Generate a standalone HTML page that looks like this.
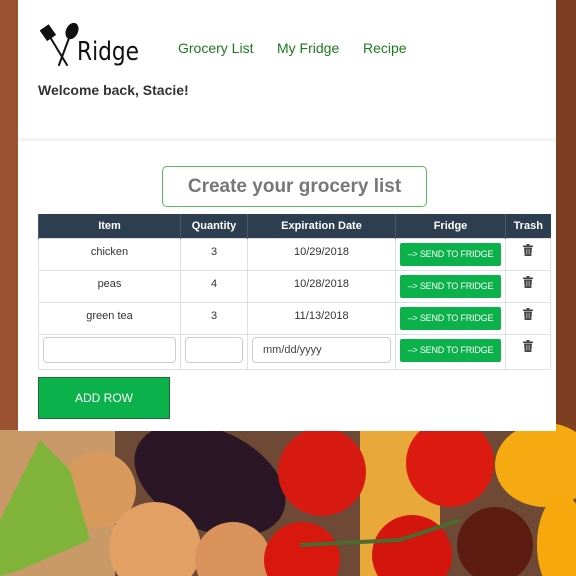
<!DOCTYPE html>
<html><head><style>
*{margin:0;padding:0;box-sizing:border-box}
body{width:576px;height:576px;overflow:hidden;position:relative;font-family:"Liberation Sans",Arial,sans-serif;background:#8a4a2a}
#bg{position:absolute;left:0;top:0}
.hdr{position:absolute;left:18px;top:0;width:538px;height:140px;background:#fff}
.band{position:absolute;left:18px;top:136px;width:538px;height:6px;background:linear-gradient(#fff,#ececec)}
.main{position:absolute;left:18px;top:141px;width:538px;height:290px;background:#fff}
.nav{position:absolute;top:40px;font-size:14px;color:#1e7a1e}
.welcome{position:absolute;left:38px;top:82px;font-size:14px;font-weight:bold;color:#333}
.title{position:absolute;left:162px;top:166px;width:265px;height:41px;border:1.5px solid #5cb85c;border-radius:5px;text-align:center;font-size:19px;font-weight:bold;color:#777;line-height:40px}
table{position:absolute;left:38px;top:214px;width:513px;border-collapse:collapse;font-size:11px;color:#333}
th{background:#2c3e50;color:#fff;height:24px;font-size:11px;border-left:1px solid #4a5a6a}
td{border:1px solid #e0e0e0;text-align:center;vertical-align:top;padding-top:7px;height:32px}
.btn{display:inline-block;background:#0bb14a;color:#fff;font-size:9px;width:101px;height:23px;line-height:23px;border-radius:2px;margin-top:-3px;letter-spacing:-0.2px}
.inp{border:1px solid #ccc;border-radius:4px;height:26px;background:#fff;text-align:left;font-size:11px;line-height:24px;padding-left:10px;color:#444;margin-top:-3px}
.add{position:absolute;left:38px;top:377px;width:132px;height:42px;background:#0bb14a;border:1px solid #1d6b2e;color:#fff;font-size:12px;text-align:center;line-height:40px}
.tr{display:inline-block;width:10px;height:12px;margin-top:-2px}
</style></head><body>
<svg id="bg" width="576" height="576">
<rect width="576" height="576" fill="#8a4a2c"/>
<rect x="0" y="0" width="20" height="430" fill="#9a5230"/>
<rect x="556" y="0" width="20" height="430" fill="#7c3f22"/>
<rect x="0" y="430" width="576" height="146" fill="#6e4a36"/>
<rect x="0" y="430" width="115" height="146" fill="#c99a68"/>
<rect x="360" y="430" width="80" height="146" fill="#e9a93a"/>
<ellipse cx="210" cy="480" rx="80" ry="50" transform="rotate(25 210 480)" fill="#2a1624"/>
<circle cx="98" cy="490" r="38" fill="#d89a5a"/>
<circle cx="155" cy="548" r="46" fill="#e2a064"/>
<circle cx="233" cy="560" r="38" fill="#d8925a"/>
<polygon points="0,520 40,440 70,470 90,540 20,570 0,576" fill="#7fb33a"/>
<circle cx="322" cy="472" r="44" fill="#d61a12"/>
<circle cx="450" cy="463" r="44" fill="#dc1a10"/>
<circle cx="302" cy="560" r="38" fill="#d8170f"/>
<circle cx="412" cy="555" r="40" fill="#d4150e"/>
<circle cx="495" cy="545" r="38" fill="#5c1c12"/>
<ellipse cx="545" cy="465" rx="50" ry="42" fill="#f4aa10"/>
<ellipse cx="562" cy="545" rx="25" ry="50" fill="#f6a80c"/>
<path d="M300 545 L400 540 L460 520" stroke="#4a6a30" stroke-width="4" fill="none"/>
</svg>
<div class="hdr"></div><div class="band"></div><div class="main"></div>
<svg style="position:absolute;left:40px;top:22px" width="110" height="50">
<g stroke="#111" stroke-width="2" fill="#111" stroke-linecap="round">
<rect x="3" y="5" width="9" height="11" transform="rotate(-35 8 10)"/>
<line x1="10" y1="15" x2="27" y2="43"/>
<ellipse cx="32" cy="9" rx="5" ry="7.5" transform="rotate(25 32 9)"/>
<line x1="29" y1="16" x2="19" y2="43"/>
</g>
<text x="37" y="38" font-family="'DejaVu Sans',sans-serif" font-size="26" fill="#111" textLength="62" lengthAdjust="spacingAndGlyphs">Ridge</text>
</svg>
<div class="nav" style="left:178px">Grocery List</div>
<div class="nav" style="left:277px">My Fridge</div>
<div class="nav" style="left:363px">Recipe</div>
<div class="welcome">Welcome back, Stacie!</div>
<div class="title">Create your grocery list</div>
<table>
<tr><th style="width:142px">Item</th><th style="width:67px">Quantity</th><th style="width:148px">Expiration Date</th><th style="width:110px">Fridge</th><th>Trash</th></tr>
<tr><td>chicken</td><td>3</td><td>10/29/2018</td><td><span class="btn">–&gt; SEND TO FRIDGE</span></td><td><svg class="tr" viewBox="0 0 10 12"><rect x="0" y="1.5" width="10" height="1.5" fill="#444"/><rect x="3.5" y="0" width="3" height="2" fill="#444"/><path d="M1 3.5h8l-.7 8.5H1.7z" fill="#444"/><path d="M3.5 5v5.5M5 5v5.5M6.5 5v5.5" stroke="#bbb" stroke-width=".6"/></svg></td></tr>
<tr><td>peas</td><td>4</td><td>10/28/2018</td><td><span class="btn">–&gt; SEND TO FRIDGE</span></td><td><svg class="tr" viewBox="0 0 10 12"><rect x="0" y="1.5" width="10" height="1.5" fill="#444"/><rect x="3.5" y="0" width="3" height="2" fill="#444"/><path d="M1 3.5h8l-.7 8.5H1.7z" fill="#444"/><path d="M3.5 5v5.5M5 5v5.5M6.5 5v5.5" stroke="#bbb" stroke-width=".6"/></svg></td></tr>
<tr><td>green tea</td><td>3</td><td>11/13/2018</td><td><span class="btn">–&gt; SEND TO FRIDGE</span></td><td><svg class="tr" viewBox="0 0 10 12"><rect x="0" y="1.5" width="10" height="1.5" fill="#444"/><rect x="3.5" y="0" width="3" height="2" fill="#444"/><path d="M1 3.5h8l-.7 8.5H1.7z" fill="#444"/><path d="M3.5 5v5.5M5 5v5.5M6.5 5v5.5" stroke="#bbb" stroke-width=".6"/></svg></td></tr>
<tr><td style="height:35px;padding:5px 4px 0"><div class="inp"></div></td><td style="padding:5px 4px 0"><div class="inp"></div></td><td style="padding:5px 4px 0"><div class="inp">mm/dd/yyyy</div></td><td><span class="btn">–&gt; SEND TO FRIDGE</span></td><td><svg class="tr" viewBox="0 0 10 12"><rect x="0" y="1.5" width="10" height="1.5" fill="#444"/><rect x="3.5" y="0" width="3" height="2" fill="#444"/><path d="M1 3.5h8l-.7 8.5H1.7z" fill="#444"/><path d="M3.5 5v5.5M5 5v5.5M6.5 5v5.5" stroke="#bbb" stroke-width=".6"/></svg></td></tr>
</table>
<div class="add">ADD ROW</div>
</body></html>
